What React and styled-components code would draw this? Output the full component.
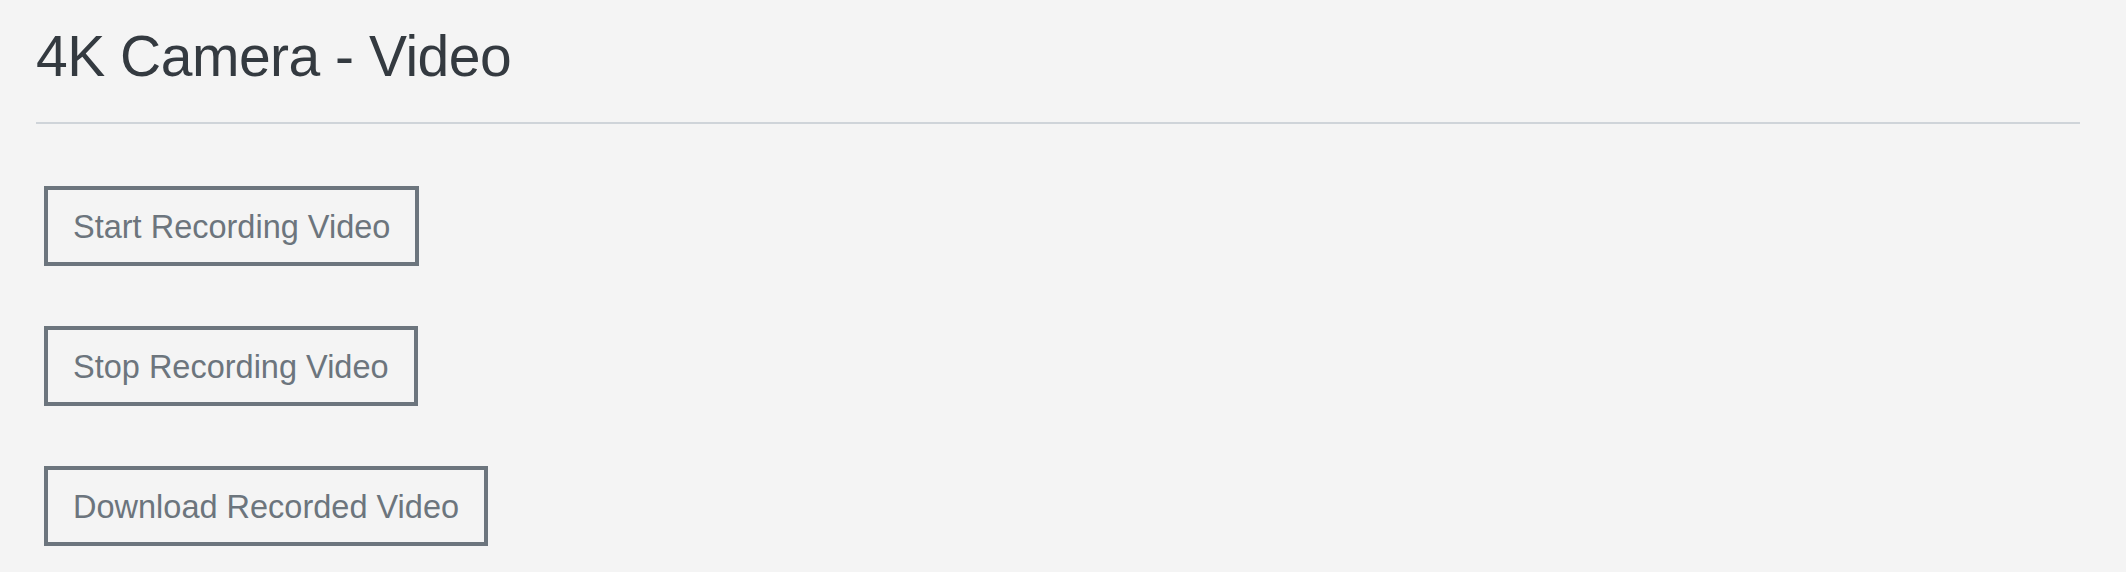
import React from 'react'
import styled, { createGlobalStyle } from 'styled-components'

const GlobalStyle = createGlobalStyle`
body {
  margin: 0;
  background: #f4f4f4;
  font-family: 'Liberation Sans', Arial, sans-serif;
}
`

const Page = styled.div`
padding: 22px 46px 0 36px;
`

const Header = styled.div`
border-bottom: 2px solid #cfd4d9;
height: 102px;
box-sizing: border-box;
`

const Title = styled.h1`
margin: 0;
font-size: 57px;
line-height: 68px;
font-weight: 400;
letter-spacing: -0.5px;
color: #343a40;
`

const ButtonList = styled.div`
display: flex;
flex-direction: column;
align-items: flex-start;
gap: 60px;
margin-top: 62px;
padding-left: 8px;
`

const OutlineButton = styled.button`
font-family: 'Liberation Sans', Arial, sans-serif;
font-size: 32.5px;
line-height: 44px;
color: #6c757d;
background: transparent;
border: 4px solid #6c757d;
border-radius: 0;
padding: 15px 25px 13px;
cursor: pointer;
`

const buttons = ['Start Recording Video', 'Stop Recording Video', 'Download Recorded Video']

export default function App() {
  return (
    <Page>
      <GlobalStyle />
      <Header>
        <Title>4K Camera - Video</Title>
      </Header>
      <ButtonList>
        {buttons.map(label => (
          <OutlineButton key={label}>{label}</OutlineButton>
        ))}
      </ButtonList>
    </Page>
  )
}
